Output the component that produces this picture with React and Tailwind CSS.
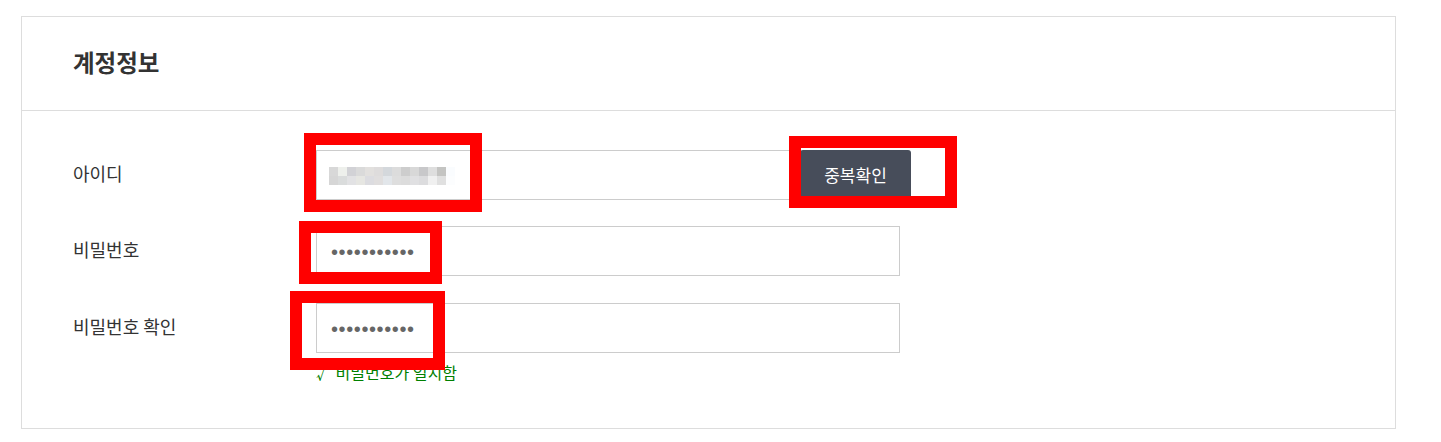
import React from 'react'

const KR = { fontFamily: '"Noto Sans CJK KR", "Noto Sans", sans-serif' }

// pixelated (blurred) user id
const MOSAIC = [
  ['#d8d8d8', '#eef0ec', '#d2d2d6', '#dadada', '#e2e0de', '#dedcdc', '#d4d8dc', '#dcdcdc', '#cdcdcd', '#d8d8d8', '#c8c8ca', '#dedede', '#c4c4c2', '#fafcfe'],
  ['#d6d6d6', '#dadcdc', '#e2e2e4', '#e6e6e2', '#dcdce0', '#e0dede', '#e2e6ea', '#dedede', '#dcdcdc', '#e0e0e2', '#dcdcde', '#f0f0f0', '#e0e0e0', '#fcfdfe'],
]

function Mosaic() {
  return (
    <div className="flex flex-col">
      {MOSAIC.map((row, i) => (
        <div key={i} className="flex">
          {row.map((c, j) => (
            <div key={j} className="w-[9px] h-[9px]" style={{ backgroundColor: c }} />
          ))}
        </div>
      ))}
    </div>
  )
}

function Row({ label, children, className = '' }) {
  return (
    <div className={`flex items-center ${className}`}>
      <div className="w-[243px] text-[18px] text-[#333] -mt-[4px]">{label}</div>
      {children}
    </div>
  )
}

function PasswordInput() {
  return (
    <input
      type="password"
      readOnly
      defaultValue="12345678901"
      className="w-[584px] h-[50px] border border-[#cccccc] px-[14px] pt-[3px] text-[20px] tracking-[0.6px] text-[#666] outline-none"
      style={{ fontFamily: '"Liberation Sans", sans-serif' }}
    />
  )
}

function RedBox({ className }) {
  return <div className={`absolute border-[12px] border-[#ff0000] pointer-events-none ${className}`} />
}

export default function App() {
  return (
    <div className="relative bg-white w-[1441px] h-[442px] pt-[16px] pl-[21px]" style={KR}>
      <section className="w-[1375px] border border-[#dddddd] bg-white">
        <div className="h-[94px] border-b border-[#dddddd] flex items-center pl-[51px]">
          <h2 className="text-[23.5px] font-bold text-[#333] -mt-[2px]">계정정보</h2>
        </div>

        <div className="pl-[51px] pt-[39px] pb-[46px]">
          <Row label="아이디">
            <div className="flex">
              <div className="w-[484px] h-[50px] border border-[#cccccc] flex items-center pl-[12px] pt-[2px]">
                <Mosaic />
              </div>
              <button className="w-[111px] h-[50px] bg-[#474d5a] text-white text-[17px] rounded-[3px]">
                중복확인
              </button>
            </div>
          </Row>

          <Row label="비밀번호" className="mt-[26px]">
            <PasswordInput />
          </Row>

          <Row label="비밀번호 확인" className="mt-[27px]">
            <PasswordInput />
          </Row>

          <div className="ml-[243px] mt-[9px] text-[16px] leading-[20px] text-[#008000]">√ 비밀번호가 일치함</div>
        </div>
      </section>

      <RedBox className="left-[304px] top-[133px] w-[178px] h-[79px]" />
      <RedBox className="left-[789px] top-[136px] w-[168px] h-[72px]" />
      <RedBox className="left-[299px] top-[221px] w-[143px] h-[63px]" />
      <RedBox className="left-[290px] top-[291px] w-[155px] h-[79px]" />
    </div>
  )
}
